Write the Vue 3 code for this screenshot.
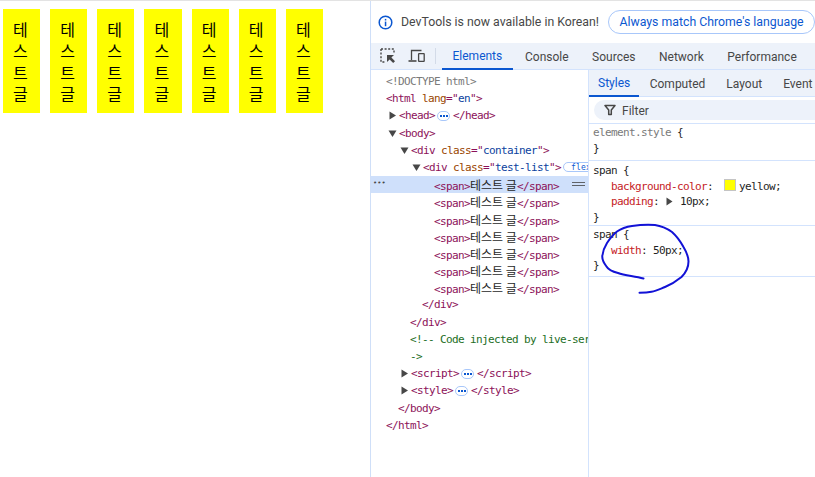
<script setup>
const boxes = 7
const T = 'tag', A = 'attr', V = 'val', K = 'ko', C = 'com', D = 'doc'
const span = { indent: 63, parts: [['<span>', T], ['테스트 글', K], ['</span>', T]] }
const rows = [
  { indent: 15, parts: [['<!DOCTYPE html>', D]] },
  { indent: 15, parts: [['<html ', T], ['lang', A], ['="', T], ['en', V], ['">', T]] },
  { indent: 28, arrow: 'r', parts: [['<head>', T]], dots: true, after: [['</head>', T]] },
  { indent: 28, arrow: 'd', parts: [['<body>', T]] },
  { indent: 40, arrow: 'd', parts: [['<div ', T], ['class', A], ['="', T], ['container', V], ['">', T]] },
  { indent: 52, arrow: 'd', parts: [['<div ', T], ['class', A], ['="', T], ['test-list', V], ['">', T]], flex: true },
  { ...span, selected: true },
  span, span, span, span, span, span,
  { indent: 51, parts: [['</div>', T]] },
  { indent: 39, parts: [['</div>', T]] },
  { indent: 39, parts: [['<!-- Code injected by live-server', C]] },
  { indent: 39, parts: [['->', C]] },
  { indent: 40, arrow: 'r', parts: [['<script>', T]], dots: true, after: [['</' + 'script>', T]] },
  { indent: 40, arrow: 'r', parts: [['<style>', T]], dots: true, after: [['</style>', T]] },
  { indent: 27, parts: [['</body>', T]] },
  { indent: 15, parts: [['</html>', T]] }
]
const tabs = ['Elements', 'Console', 'Sources', 'Network', 'Performance']
const sideTabs = ['Styles', 'Computed', 'Layout', 'Event Listeners']
</script>

<template>
  <div class="screen">
    <main class="page">
      <span v-for="n in boxes" :key="n" class="box">테스트 글</span>
    </main>

    <section class="devtools">
      <div class="infobar">
        <svg class="info" width="15" height="15" viewBox="0 0 15 15" aria-hidden="true">
          <circle cx="7.5" cy="7.5" r="6.3" fill="none" stroke="#0b57d0" stroke-width="1.5" />
          <rect x="6.8" y="6.6" width="1.5" height="4.6" fill="#0b57d0" />
          <rect x="6.8" y="3.9" width="1.5" height="1.6" fill="#0b57d0" />
        </svg>
        <span class="info-text">DevTools is now available in Korean!</span>
        <button class="match">Always match Chrome's language</button>
      </div>

      <div class="toolbar">
        <svg class="tool first" width="16" height="16" viewBox="0 0 16 16" aria-hidden="true">
          <path d="M1 1h13v5M1 1v13h5" fill="none" stroke="#474747" stroke-width="1.4" stroke-dasharray="2 1.6" />
          <path d="M7 7h7l-2.6 2.6L15 13.2 13.2 15l-3.6-3.6L7 14z" fill="#474747" />
        </svg>
        <svg class="tool" width="17" height="16" viewBox="0 0 17 16" aria-hidden="true">
          <path d="M3.5 12V2.5h10" fill="none" stroke="#474747" stroke-width="1.3" />
          <path d="M.5 13h8" stroke="#474747" stroke-width="1.6" />
          <rect x="10.6" y="5.6" width="5.6" height="7.8" rx=".5" fill="none" stroke="#474747" stroke-width="1.3" />
        </svg>
        <i class="sep"></i>
        <nav class="tabs">
          <span v-for="(t, i) in tabs" :key="t" class="tab" :class="{ on: i === 0 }">{{ t }}</span>
        </nav>
      </div>

      <div class="panes">
        <div class="dom">
          <div v-for="(r, i) in rows" :key="i" class="row" :class="{ sel: r.selected }" :style="{ paddingLeft: r.indent + 'px' }">
            <span v-if="r.selected" class="more">•••</span>
            <svg v-if="r.arrow" class="arrow" :style="{ left: r.indent - 11 + 'px' }" width="9" height="9" viewBox="0 0 9 9" aria-hidden="true">
              <path :d="r.arrow === 'r' ? 'M1.5 0.5L8 4.5L1.5 8.5z' : 'M0.5 1.5H8.5L4.5 8z'" fill="#474747" />
            </svg>
            <span v-for="(p, j) in r.parts" :key="j" :class="p[1]">{{ p[0] }}</span>
            <span v-if="r.dots" class="dots"><b></b><b></b><b></b></span>
            <span v-for="(p, j) in r.after" :key="'a' + j" :class="p[1]">{{ p[0] }}</span>
            <span v-if="r.flex" class="flexb">flex</span>
            <span v-if="r.selected" class="eq"></span>
          </div>
        </div>

        <aside class="side">
          <div class="stabs">
            <span v-for="(t, i) in sideTabs" :key="t" class="stab" :class="{ on: i === 0 }">{{ t }}</span>
          </div>
          <div class="filterbar">
            <div class="filter">
              <svg width="12" height="12" viewBox="0 0 12 12" aria-hidden="true">
                <path d="M1 1.5h10L7.3 6v4.500H4.700V6z" fill="none" stroke="#474747" stroke-width="1.5" stroke-linejoin="round" />
              </svg>
              <span>Filter</span>
            </div>
          </div>
          <div class="rule r1">
            <div class="ln muted">element.style <em>{</em></div>
            <div class="ln">}</div>
          </div>
          <div class="rule r2">
            <div class="ln">span {</div>
            <div class="ln prop"><em class="p">background-color</em>:&nbsp; <i class="swatch"></i>yellow;</div>
            <div class="ln prop"><em class="p">padding</em>: <svg class="tri" width="7" height="9" viewBox="0 0 7 9" aria-hidden="true"><path d="M.5.5L6.5 4.500L.5 8.500z" fill="#474747" /></svg> 10px;</div>
            <div class="ln">}</div>
          </div>
          <div class="rule r3">
            <div class="ln">span {</div>
            <div class="ln prop"><em class="p">width</em>: 50px;</div>
            <div class="ln">}</div>
          </div>
        </aside>
      </div>
    </section>

    <svg class="scribble" width="815" height="477" viewBox="0 0 815 477" aria-hidden="true">
      <path d="M643.500 278.500C634 276 625 275.500 618 273C612 271.500 608.500 270 606.500 266.500C603.500 262.500 602 259.500 602.300 256C602.800 251 604.500 247 607 243C610 238.500 613 234.500 617 231.500C622 228 626 226.800 632 226C640 224.800 648 224.500 655 225C662 226 667 228.500 672 232C677 236.500 680.500 241.500 683.500 247C686.500 252 688.500 256.500 688.500 261.500C688.500 267.500 686 272.500 681.500 277C676 281.500 671 284.500 665 287C660 289 656 291 651.500 291.800C647.500 292.600 644 292.700 639.500 292.700" fill="none" stroke="#1212d6" stroke-width="2" stroke-linecap="round" stroke-linejoin="round" />
    </svg>
  </div>
</template>

<style>
html, body { margin: 0; background: #fff; }
</style>

<style scoped>
.screen {
  position: relative;
  width: 815px;
  height: 477px;
  display: flex;
  overflow: hidden;
  border-top: 1px solid #e3e3e3;
  box-sizing: border-box;
  background: #fff;
}
.page {
  width: 370px;
  flex: none;
  display: flex;
  align-items: flex-start;
  gap: 10px;
  padding: 8px 0 0 3px;
  box-sizing: border-box;
}
.box {
  width: 37.17px;
  height: 104px;
  box-sizing: border-box;
  padding: 10px;
  flex: none;
  background: #ff0;
  color: #000;
  font: 16px/21.3px "Noto Sans CJK KR", sans-serif;
  word-break: break-all;
}
.devtools {
  flex: 1;
  min-width: 0;
  display: flex;
  flex-direction: column;
  border-left: 1px solid #cfdff8;
  font-family: Roboto, "Noto Sans CJK KR", sans-serif;
  font-size: 12px;
  color: #474747;
}
.infobar {
  height: 42px;
  flex: none;
  display: flex;
  align-items: center;
  padding-left: 7px;
  box-sizing: border-box;
  background: #fff;
}
.info { flex: none; margin-right: 8px; }
.info-text { width: 207px; flex: none; white-space: nowrap; color: #474747; font-size: 12.3px; }
.match {
  width: 207px;
  height: 24px;
  flex: none;
  padding: 0;
  border: 1px solid #a8c7fa;
  border-radius: 12px;
  background: #fff;
  color: #0b57d0;
  font: 12.3px Roboto, sans-serif;
  white-space: nowrap;
}
.toolbar {
  height: 27px;
  flex: none;
  display: flex;
  align-items: center;
  padding-left: 9px;
  box-sizing: border-box;
  background: #edf2fa;
  border-bottom: 1px solid #d3e3fd;
}
.tool { margin-right: 12px; flex: none; }
.sep { width: 1px; height: 16px; background: #d3dbe8; margin: 0 5.5px 0 -2px; flex: none; }
.tabs { display: flex; height: 100%; }
.tab {
  padding: 1px 11.75px 0;
  display: flex;
  align-items: center;
  white-space: nowrap;
  height: 26px;
  box-sizing: border-box;
}
.tab.on { color: #0b57d0; border-bottom: 2px solid #0b57d0; margin-bottom: -1px; height: 27px; padding: 0 11px; }
.panes { flex: 1; min-height: 0; display: flex; }
.dom {
  width: 218px;
  flex: none;
  padding-top: 3px;
  box-sizing: border-box;
  overflow: hidden;
  font-family: "DejaVu Sans Mono", "Noto Sans CJK KR", monospace;
  font-size: 11px;
  letter-spacing: -0.62px;
  border-right: 1px solid #d3e3fd;
}
.row {
  position: relative;
  height: 17.2px;
  line-height: 17.2px;
  white-space: nowrap;
  box-sizing: border-box;
}
.row.sel { background: #cfe0fb; }
.tag { color: #8c1159; }
.attr { color: #994500; }
.val { color: #0b3f9e; }
.com { color: #236e25; }
.doc { color: #7a7a7a; }
.ko { color: #1f1f1f; font: 12px/17.2px "Noto Sans CJK KR", sans-serif; letter-spacing: 0; }
.arrow { position: absolute; top: 4px; }
.more { position: absolute; left: 2px; top: -1px; font-size: 7px; letter-spacing: 0; color: #474747; }
.dots {
  display: inline-flex;
  align-items: center;
  justify-content: center;
  gap: 1px;
  box-sizing: border-box;
  width: 13px;
  height: 10px;
  margin: 0 3px 0 2px;
  vertical-align: middle;
  border: 1px solid #a8c7fa;
  border-radius: 5px;
  background: #fff;
}
.dots b { width: 2px; height: 2px; background: #0b57d0; }
.flexb {
  position: absolute;
  left: 192px;
  top: 3px;
  width: 36px;
  height: 10px;
  padding-left: 7px;
  box-sizing: border-box;
  border: 1px solid #a8c7fa;
  border-radius: 6px;
  background: #fff;
  font: 8px/9px "DejaVu Sans Mono", monospace;
  letter-spacing: 0.2px;
  color: #0b57d0;
}
.eq {
  position: absolute;
  left: 201px;
  top: 6px;
  width: 13px;
  height: 4px;
  box-sizing: border-box;
  border-top: 1px solid #5f6368;
  border-bottom: 1px solid #5f6368;
}
.side {
  flex: 1;
  min-width: 0;
  overflow: hidden;
  font-family: "DejaVu Sans Mono", "Noto Sans CJK KR", monospace;
  font-size: 11px;
  letter-spacing: -0.62px;
  color: #1f1f1f;
}
.stabs {
  height: 27px;
  display: flex;
  background: #edf2fa;
  border-bottom: 1px solid #d3e3fd;
  box-sizing: border-box;
  font-family: Roboto, sans-serif;
  font-size: 12px;
  letter-spacing: 0;
  color: #474747;
  white-space: nowrap;
}
.stab { padding: 1px 10.5px 0; flex: none; line-height: 27px; height: 27px; box-sizing: border-box; }
.stab.on { color: #0b57d0; border-bottom: 2px solid #0b57d0; padding: 1px 9px 0; line-height: 25px; }
.filterbar {
  height: 27px;
  box-sizing: border-box;
  padding: 3px 0 3px 5px;
  border-bottom: 1px solid #d3e3fd;
}
.filter {
  height: 20px;
  display: flex;
  align-items: center;
  gap: 6px;
  padding-left: 10px;
  border-radius: 10px 0 0 10px;
  background: #edf2fa;
  font-family: Roboto, sans-serif;
  font-size: 12px;
  letter-spacing: 0;
  color: #474747;
}
.filter span { padding-top: 1px; }
.rule { box-sizing: border-box; padding: 1px 0 0 4px; border-bottom: 1px solid #d3e3fd; }
.r1 { height: 37px; padding-top: 1px; }
.r2 { height: 65px; padding-top: 2px; }
.r3 { height: 51px; padding-top: 1px; }
.ln { height: 15.5px; line-height: 15.5px; white-space: nowrap; }
.r1 .ln { height: 16px; line-height: 16px; }
.prop { padding-left: 18px; }
.muted { color: #7a7a7a; }
.muted em { color: #1f1f1f; font-style: normal; }
.p { color: #c5221f; font-style: normal; }
.swatch {
  display: inline-block;
  width: 10px;
  height: 10px;
  margin: 0 3px 0 -1px;
  vertical-align: -1px;
  background: #ff0;
  border: 1px solid #c4c4c4;
}
.tri { vertical-align: -1px; margin: 0 1px; }
.scribble { position: absolute; left: 0; top: -1px; pointer-events: none; }
</style>
